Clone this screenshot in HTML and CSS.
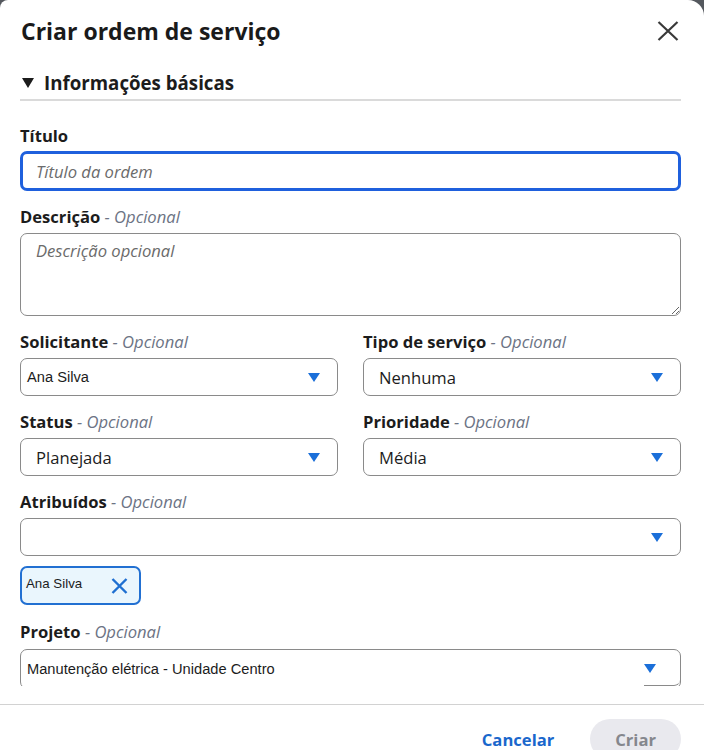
FILE: index.html
```html
<!DOCTYPE html>
<html lang="pt-BR">
<head>
<meta charset="utf-8">
<title>Criar ordem de serviço</title>
<link rel="stylesheet" href="styles.css">
</head>
<body>
<div class="modal">
  <div class="header">
    <h1 class="title">Criar ordem de serviço</h1>
    <button class="close" aria-label="Fechar">
      <svg width="22" height="20" viewBox="0 0 22 20"><path d="M1.5 1 L20.5 19 M20.5 1 L1.5 19" stroke="#3a3a3a" stroke-width="2.2" fill="none"/></svg>
    </button>
  </div>
  <div class="scroll">
    <div class="section-head">
      <svg class="caret" width="12" height="10" viewBox="0 0 12 10"><polygon points="0,0 12,0 6,10" fill="#1c1c1c"/></svg>
      <span>Informações básicas</span>
    </div>

    <div class="field first">
      <div class="label">Título</div>
      <input class="input focus" type="text" placeholder="Título da ordem">
    </div>

    <div class="field">
      <div class="label">Descrição<span class="opt"> - Opcional</span></div>
      <textarea class="textarea" placeholder="Descrição opcional"></textarea>
    </div>

    <div class="row">
      <div class="field">
        <div class="label">Solicitante<span class="opt"> - Opcional</span></div>
        <div class="select native"><span>Ana Silva</span><svg class="arrow" width="12" height="9" viewBox="0 0 12 9"><polygon points="0,0 12,0 6,9" fill="#1b6fd9"/></svg></div>
      </div>
      <div class="field">
        <div class="label">Tipo de serviço<span class="opt"> - Opcional</span></div>
        <div class="select"><span>Nenhuma</span><svg class="arrow" width="12" height="9" viewBox="0 0 12 9"><polygon points="0,0 12,0 6,9" fill="#1b6fd9"/></svg></div>
      </div>
    </div>

    <div class="row">
      <div class="field">
        <div class="label">Status<span class="opt"> - Opcional</span></div>
        <div class="select"><span>Planejada</span><svg class="arrow" width="12" height="9" viewBox="0 0 12 9"><polygon points="0,0 12,0 6,9" fill="#1b6fd9"/></svg></div>
      </div>
      <div class="field">
        <div class="label">Prioridade<span class="opt"> - Opcional</span></div>
        <div class="select"><span>Média</span><svg class="arrow" width="12" height="9" viewBox="0 0 12 9"><polygon points="0,0 12,0 6,9" fill="#1b6fd9"/></svg></div>
      </div>
    </div>

    <div class="field tight">
      <div class="label">Atribuídos<span class="opt"> - Opcional</span></div>
      <div class="select"><span></span><svg class="arrow" width="12" height="9" viewBox="0 0 12 9"><polygon points="0,0 12,0 6,9" fill="#1b6fd9"/></svg></div>
      <div class="chips">
        <div class="chip">
          <span class="chip-text">Ana Silva</span>
          <svg width="17" height="16" viewBox="0 0 17 16"><path d="M1.5 1 L15.5 15 M15.5 1 L1.5 15" stroke="#1f6fd1" stroke-width="2.4" fill="none"/></svg>
        </div>
      </div>
    </div>

    <div class="field project-field">
      <div class="label">Projeto<span class="opt"> - Opcional</span></div>
      <div class="select native project"><span>Manutenção elétrica - Unidade Centro</span><span class="arrow-box"><svg class="arrow" width="12" height="9" viewBox="0 0 12 9"><polygon points="0,0 12,0 6,9" fill="#1b6fd9"/></svg></span></div>
    </div>
  </div>
  <div class="footer">
    <button class="btn-cancel">Cancelar</button>
    <button class="btn-create" disabled>Criar</button>
  </div>
</div>
</body>
</html>
```

FILE: styles.css
```css
* { box-sizing: border-box; }
html, body { margin: 0; height: 100%; }
body {
  background: #54585e;
  font-family: "Open Sans", "Liberation Sans", sans-serif;
  color: #1c1c1c;
}
.modal {
  height: 750px;
  background: #fff;
  border-radius: 8px 16px 0 0;
  display: flex;
  flex-direction: column;
  overflow: hidden;
}
.header {
  height: 46px;
  padding: 16px 25px 0 21px;
  display: flex;
  justify-content: space-between;
  align-items: center;
  flex: none;
}
.title {
  margin: 0;
  font-size: 23px;
  line-height: 30px;
  font-weight: 700;
  color: #1a1a1a;
}
.close {
  border: 0;
  background: none;
  padding: 0;
  width: 22px;
  height: 20px;
  display: flex;
}
.scroll {
  flex: 1;
  min-height: 0;
  overflow: hidden;
  padding: 25px 23px 0 20px;
}
.section-head {
  display: flex;
  align-items: center;
  gap: 10px;
  padding: 0 0 4px 2px;
  border-bottom: 2px solid #dadada;
  font-size: 18.7px;
  line-height: 24px;
  font-weight: 700;
}
.field { margin-bottom: 15px; }
.field.first { margin-top: 24px; }
.field.tight { margin-bottom: 16px; }
.label {
  font-size: 16.6px;
  line-height: 22px;
  font-weight: 700;
  margin-bottom: 5px;
}
.field.first .label { margin-bottom: 4px; }
.project-field .label { margin-top: 1px; margin-bottom: 6px; }
.opt {
  font-weight: 400;
  font-style: italic;
  color: #6c7384;
}
.input {
  display: block;
  width: 100%;
  height: 40px;
  border: 3px solid #1f60dd;
  border-radius: 7px;
  padding: 0 13px;
  font-family: "Open Sans", sans-serif;
  font-size: 16.6px;
  outline: none;
}
.input::placeholder, .textarea::placeholder {
  color: #6b6b6b;
  font-style: italic;
}
.textarea {
  display: block;
  width: 100%;
  height: 83px;
  border: 1px solid #8a8a8a;
  border-radius: 7px;
  padding: 6px 15px;
  font-family: "Open Sans", sans-serif;
  font-size: 16.6px;
  line-height: 22px;
  resize: vertical;
}
.row {
  display: grid;
  grid-template-columns: 1fr 1fr;
  column-gap: 25px;
}
.select {
  position: relative;
  height: 38px;
  border: 1px solid #8a8a8a;
  border-radius: 7px;
  display: flex;
  align-items: center;
  justify-content: space-between;
  padding: 0 17px 0 15px;
  font-size: 16.6px;
  color: #1c1c1c;
}
.select.native {
  font-family: "Liberation Sans", Arial, sans-serif;
  font-size: 14.67px;
  padding-left: 6px;
}
.arrow { display: block; flex: none; }
.select.project {
  height: 40px;
  padding-right: 53px;
}
.arrow-box {
  position: absolute;
  right: 0;
  top: 0;
  bottom: 2px;
  width: 36px;
  border-bottom: 1px solid #8a8a8a;
  border-bottom-right-radius: 6px;
  display: flex;
  align-items: center;
  justify-content: flex-start;
  padding-top: 2px;
}
.chips { margin-top: 10px; display: flex; }
.chip {
  width: 121px;
  height: 39px;
  border: 2px solid #2270d2;
  background: #eaf6fd;
  border-radius: 7px;
  display: flex;
  align-items: center;
  justify-content: space-between;
  padding: 0 11px 0 4px;
}
.chip-text {
  font-family: "Liberation Sans", Arial, sans-serif;
  font-size: 13.3px;
  color: #1c1c1c;
  margin-top: -4px;
}
.footer {
  flex: none;
  height: 46px;
  margin-top: 18px;
  border-top: 1px solid #d2d2d2;
  padding: 14px 23px 0 0;
  display: flex;
  justify-content: flex-end;
  align-items: flex-start;
  gap: 18px;
}
.btn-cancel, .btn-create {
  font-family: "Open Sans", sans-serif;
  font-size: 16.6px;
  font-weight: 700;
  height: 40px;
  border: 0;
  padding: 0 18px;
  border-radius: 20px;
  background: none;
}
.btn-cancel { color: #1a67cc; }
.btn-create {
  background: #e9e9ee;
  color: #85878d;
  padding: 0 25px;
}
```
